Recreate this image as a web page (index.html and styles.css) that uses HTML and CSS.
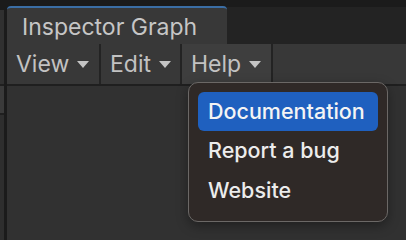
FILE: index.html
```html
<!DOCTYPE html>
<html lang="en">
<head>
    <meta charset="UTF-8">
    <title>Inspector Graph</title>
    <link rel="stylesheet" href="styles.css">
</head>
<body>
    <div class="side"></div>
    <div class="panel">
        <div class="tab-row">
            <div class="tab">Inspector Graph</div>
            <div class="tab-rest"></div>
        </div>
        <div class="toolbar">
            <div class="tool-item item-view">View <span class="caret"></span></div>
            <div class="tool-item item-edit">Edit <span class="caret"></span></div>
            <div class="tool-item item-help active">Help <span class="caret"></span></div>
            <div class="tool-rest"></div>
        </div>
        <div class="content"></div>
    </div>

    <div class="menu">
        <div class="menu-item selected">Documentation</div>
        <div class="menu-item">Report a bug</div>
        <div class="menu-item">Website</div>
    </div>
</body>
</html>
```

FILE: styles.css
```css
* {
    margin: 0;
    padding: 0;
    box-sizing: border-box;
}

html, body {
    width: 406px;
    height: 240px;
    overflow: hidden;
}

body {
    background: #1b1b1b;
    display: flex;
    gap: 3px;
    font-family: Inter, "Liberation Sans", sans-serif;
    position: relative;
}

.side {
    width: 4px;
    margin-top: 10px;
    background: linear-gradient(#303030 0, #303030 74px, #1f1f1f 74px, #1f1f1f 76px,
        #3a3a3a 76px, #3a3a3a 103px, #1f1f1f 103px, #1f1f1f 105px, #2e2e2e 105px);
}

.panel {
    flex: 1;
    display: flex;
    flex-direction: column;
    padding-top: 6px;
}

.tab-row {
    display: flex;
    height: 38px;
}

.tab {
    width: 220px;
    background: #383838;
    border-top: 2px solid #3b6ea5;
    border-radius: 4px 4px 0 0;
    color: #c6c6c6;
    font-size: 23px;
    padding-left: 15px;
    line-height: 38px;
}

.tab-rest {
    flex: 1;
    margin-top: 1px;
    background: #232323;
}

.toolbar {
    display: flex;
    height: 42px;
    background: #383838;
    border-bottom: 2px solid #1f1f1f;
}

.tool-item {
    display: flex;
    align-items: center;
    gap: 8px;
    padding-left: 9px;
    color: #c2c2c2;
    font-size: 23px;
    border-right: 2px solid #232323;
}

.item-view { width: 94px; }
.item-edit { width: 81px; }
.item-help { width: 91px; }

.active {
    background: #3e3e3e;
}

.caret {
    width: 0;
    height: 0;
    border-left: 6px solid transparent;
    border-right: 6px solid transparent;
    border-top: 7px solid #c4c4c4;
}

.tool-rest {
    flex: 1;
}

.content {
    flex: 1;
    background: #313131;
}

.menu {
    position: absolute;
    left: 188px;
    top: 82px;
    width: 200px;
    height: 140px;
    background: #2f2927;
    border: 1px solid #6b6866;
    border-radius: 10px;
    padding: 9px 9px 0;
    box-shadow: 0 4px 12px rgba(0, 0, 0, 0.35);
}

.menu-item {
    height: 39.5px;
    line-height: 39px;
    padding-left: 10px;
    color: #ececec;
    font-size: 21.5px;
    font-weight: 500;
    border-radius: 6px;
}

.menu-item.selected {
    height: 39px;
    background: #1f60bf;
    color: #f4f4f4;
}
```
